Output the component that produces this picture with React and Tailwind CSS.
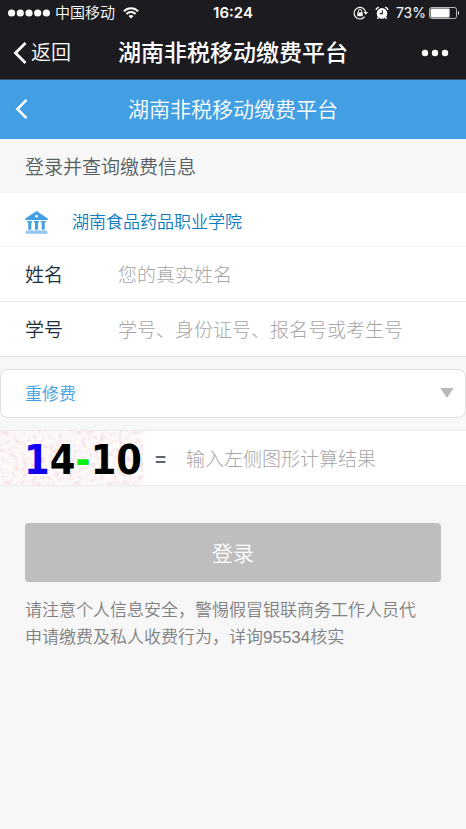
import React from "react";

const Chevron = ({ className }) => (
  <svg viewBox="0 0 13 22" className={className} fill="none" stroke="currentColor" strokeWidth="2.8" aria-hidden="true">
    <path d="M12 1 L2 11 L12 21" />
  </svg>
);

function StatusBar() {
  return (
    <div className="relative flex h-[26px] items-center justify-between pr-[6px] pl-2 text-white">
      <div className="flex items-center">
        <svg viewBox="0 0 42 8" className="h-2 w-[42px]" fill="currentColor" aria-hidden="true">
          <circle cx="3.6" cy="4" r="3.6" />
          <circle cx="12.3" cy="4" r="3.6" />
          <circle cx="21" cy="4" r="3.6" />
          <circle cx="29.7" cy="4" r="3.6" />
          <circle cx="38.4" cy="4" r="3.6" />
        </svg>
        <span className="ml-[5px] text-[15px] leading-5 font-[350]">中国移动</span>
        <svg viewBox="0 0 16 12" className="ml-2 h-3 w-4" fill="none" stroke="currentColor" strokeWidth="1.9" aria-hidden="true">
          <path d="M0.8 4.4 C4.8 0.2 11.2 0.2 15.2 4.4" />
          <path d="M3.4 7 C6 4.4 10 4.4 12.6 7" />
          <path d="M8 11.6 L5.5 9 C7 7.7 9 7.7 10.5 9 Z" fill="currentColor" stroke="none" />
        </svg>
      </div>
      <span className="absolute left-1/2 -translate-x-1/2 font-['Inter','Liberation_Sans',sans-serif] text-[15px] leading-5 font-semibold">16:24</span>
      <div className="flex items-center">
        <svg viewBox="0 0 15 14" className="h-[14px] w-[15px]" fill="none" stroke="currentColor" aria-hidden="true">
          <path d="M11.6 10.6 A5.8 5.8 0 1 1 12.6 6.2" strokeWidth="1.1" />
          <path d="M10.6 6 H15 L12.8 8.8 Z" fill="currentColor" stroke="none" />
          <rect x="4.3" y="6.4" width="5.4" height="3.8" fill="currentColor" stroke="none" />
          <path d="M5.3 6.6 V5.2 a1.7 1.7 0 0 1 3.4 0 V6.6" strokeWidth="1" />
        </svg>
        <svg viewBox="0 0 14 14" className="ml-[7px] h-[14px] w-[14px]" aria-hidden="true">
          <circle cx="7" cy="7.4" r="5.3" fill="currentColor" />
          <path d="M1.2 4 A3 3 0 0 1 4 1.4 M12.8 4 A3 3 0 0 0 10 1.4 M3.4 11.4 L2.4 12.8 M10.6 11.4 L11.6 12.8" fill="none" stroke="currentColor" strokeWidth="1.4" />
          <path d="M7.3 4.2 V7.6 H4.8" fill="none" stroke="#1c1c20" strokeWidth="1.1" />
        </svg>
        <span className="ml-[7px] font-['Inter','Liberation_Sans',sans-serif] text-sm leading-5">73%</span>
        <svg viewBox="0 0 31 12" className="ml-[3px] h-3 w-[31px]" aria-hidden="true">
          <rect x="0.5" y="0.5" width="27" height="11" rx="2" fill="none" stroke="#b9b9bb" />
          <rect x="1.6" y="1.6" width="19" height="8.8" rx="1" fill="currentColor" />
          <path d="M29 4 a2.4 2.4 0 0 1 0 4 Z" fill="currentColor" />
        </svg>
      </div>
    </div>
  );
}

function Captcha() {
  return (
    <button type="button" aria-label="换一张" className="relative h-full w-[143px] shrink-0 bg-[#fefafa] pl-6">
      <svg className="absolute inset-0 h-full w-full" aria-hidden="true">
        <filter id="grain" x="0" y="0" width="100%" height="100%">
          <feTurbulence type="fractalNoise" baseFrequency="0.22" numOctaves="4" seed="8" />
          <feColorMatrix values="0 0 0 0 0.88  0 0 0 0 0.72  0 0 0 0 0.76  2.4 0 0 0 -1.05" />
        </filter>
        <rect width="100%" height="100%" filter="url(#grain)" />
      </svg>
      <span className="relative block pt-1 text-left font-['DejaVu_Sans_Condensed','DejaVu_Sans',sans-serif] text-[41px] leading-[50px] font-bold whitespace-nowrap text-black">
        <span className="text-[#1100ee]">1</span>4<span className="text-[#11ee11]">-</span>10
      </span>
    </button>
  );
}

const inputStyle = "h-full min-w-0 flex-1 bg-transparent text-[19px] font-light text-[#333] outline-none placeholder:text-[#a6a6a6] placeholder:opacity-100";

function Field({ id, label, placeholder, border }) {
  return (
    <div className={`flex h-[55px] items-center border-b pt-1 pl-[25px] ${border}`}>
      <label htmlFor={id} className="w-[93px] shrink-0 text-[19px] font-[350] text-[#1d2f3a]">{label}</label>
      <input id={id} type="text" placeholder={placeholder} className={inputStyle} />
    </div>
  );
}

export default function App() {
  return (
    <div className="min-h-screen bg-[#f7f7f7] font-['Liberation_Sans','Noto_Sans_CJK_SC',sans-serif]">
      <header className="bg-[#1c1c20] text-white">
        <StatusBar />
        <div className="relative flex h-[54px] items-center justify-between border-b border-[#35506a] pr-[17px] pl-[13px]">
          <button type="button" className="flex items-center gap-1 text-xl font-[350]">
            <Chevron className="h-[22px] w-[14px]" />
            返回
          </button>
          <h1 className="absolute left-1/2 -translate-x-1/2 pt-px text-[23px] font-medium whitespace-nowrap">湖南非税移动缴费平台</h1>
          <button type="button" aria-label="更多">
            <svg viewBox="0 0 28 8" className="h-2 w-7" fill="currentColor" aria-hidden="true">
              <circle cx="4" cy="4" r="3.2" />
              <circle cx="14" cy="4" r="3.2" />
              <circle cx="24" cy="4" r="3.2" />
            </svg>
          </button>
        </div>
      </header>

      <div className="relative flex h-[59px] items-center justify-center bg-[#429fe4] text-white">
        <button type="button" aria-label="返回" className="absolute left-[15px] pb-0.5">
          <Chevron className="h-5 w-[13px]" />
        </button>
        <h2 className="text-[21px] font-[350]">湖南非税移动缴费平台</h2>
      </div>

      <form>
        <h3 className="flex h-[54px] items-center pt-1 pl-[25px] text-[19px] font-[350] text-[#555e62]">登录并查询缴费信息</h3>
        <div className="bg-white">
          <div className="flex h-[54px] items-center border-b border-[#f4f4f4] pt-[6px] pl-[25px]">
            <svg viewBox="0 0 23 23" className="h-[23px] w-[23px]" fill="#429fe4" aria-hidden="true">
              <path fillRule="evenodd" d="M11.5 0 L22.7 7.6 V9 H0.3 V7.6 Z M11.5 3.8 a1.4 1.4 0 1 0 0.01 0 Z" />
              <path d="M2.2 10 H7.2 V11.4 H6.3 V18.8 H3.3 V11.4 H2.2 Z M9 10 H14 V11.4 H13 V18.8 H10 V11.4 H9 Z M15.8 10 H20.8 V11.4 H19.7 V18.8 H16.7 V11.4 H15.8 Z" />
              <path d="M1.5 19.4 H21.5 L23 22.8 H0 Z" fill="#8fc5ef" />
            </svg>
            <span className="ml-6 text-[17px] font-[350] text-[#0d7bc1]">湖南食品药品职业学院</span>
          </div>
          <Field id="name" label="姓名" placeholder="您的真实姓名" border="border-[#e6e6e6]" />
          <Field id="number" label="学号" placeholder="学号、身份证号、报名号或考生号" border="border-[#dedede]" />
        </div>

        <div className="relative mt-3">
          <select aria-label="缴费项目" className="block h-[49px] w-full appearance-none rounded-lg border border-[#dfdfdf] bg-white px-6 pt-0.5 text-[17px] font-[350] text-[#429fe4] outline-none">
            <option>重修费</option>
          </select>
          <svg viewBox="0 0 14 10" className="pointer-events-none absolute top-[19px] right-3 h-[10px] w-[14px]" fill="#b9b9b9" aria-hidden="true">
            <path d="M0.3 0 H13.7 L7 10 Z" />
          </svg>
        </div>

        <div className="mt-3 flex h-[56px] items-center border-y border-[#ebebeb] bg-white">
          <Captcha />
          <label htmlFor="result" className="w-[43px] shrink-0 pt-1 pl-3 text-[19px] font-bold text-[#5a6570]">=</label>
          <input id="result" type="text" placeholder="输入左侧图形计算结果" className={`${inputStyle} pt-1`} />
        </div>

        <div className="px-[25px] pt-[37px]">
          <button type="submit" className="h-[59px] w-full rounded-[4px] bg-[#bebebe] pt-0.5 text-[21px] font-[350] text-white">登录</button>
          <p className="mt-[15px] text-[17px] leading-[27px] font-[350] text-[#808080]">
            请注意个人信息安全，警惕假冒银联商务工作人员代
            <br />
            申请缴费及私人收费行为，详询95534核实
          </p>
        </div>
      </form>
    </div>
  );
}
